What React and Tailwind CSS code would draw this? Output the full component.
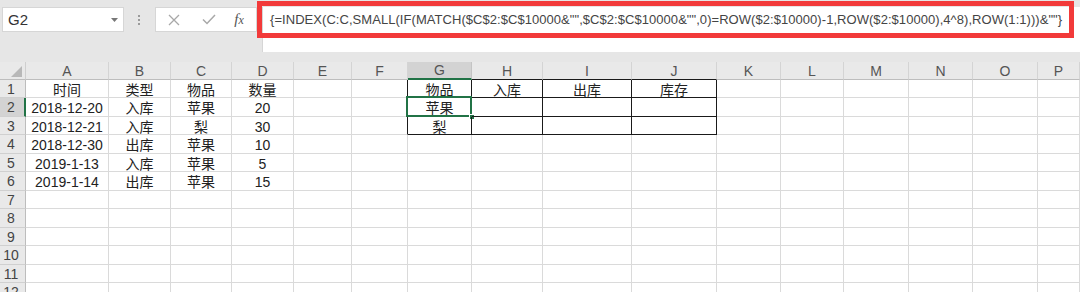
import React from 'react';

const FORMULA = '{=INDEX(C:C,SMALL(IF(MATCH($C$2:$C$10000&"",$C$2:$C$10000&"",0)=ROW($2:$10000)-1,ROW($2:$10000),4^8),ROW(1:1)))&""}';

const COLS = ['A', 'B', 'C', 'D', 'E', 'F', 'G', 'H', 'I', 'J', 'K', 'L', 'M', 'N', 'O', 'P'];
const ROW_HEIGHTS = ['h-[18px]', 'h-[19px]', 'h-[18px]', 'h-[19px]', 'h-[18px]', 'h-[19px]', 'h-[18px]', 'h-[19px]', 'h-[18px]', 'h-[19px]', 'h-[18px]', 'h-[19px]'];

const GRID = 'grid grid-cols-[26px_83px_62px_61px_62px_58px_56px_64px_71px_89px_85px_64px_63px_65px_64px_65px_42px]';

// cell contents, keyed by row then column index (A = 0)
const DATA = {
  1: ['时间', '类型', '物品', '数量', '', '', '物品', '入库', '出库', '库存'],
  2: ['2018-12-20', '入库', '苹果', '20', '', '', '苹果'],
  3: ['2018-12-21', '入库', '梨', '30', '', '', '梨'],
  4: ['2018-12-30', '出库', '苹果', '10'],
  5: ['2019-1-13', '入库', '苹果', '5'],
  6: ['2019-1-14', '出库', '苹果', '15'],
};

function cellBorder(row, col) {
  const inTable = row >= 1 && row <= 3;
  if (inTable && col >= 6 && col <= 9) return 'border-r border-b border-r-[#1a1a1a] border-b-[#1a1a1a]';
  if (inTable && col === 5) return 'border-r border-b border-r-[#1a1a1a] border-b-[#dadada]';
  return 'border-r border-b border-[#dadada]';
}

function Toolbar() {
  return (
    <div className="h-[62px] bg-[#e6e6e6] flex items-start pt-[7px] pl-[2px]">
      <div className="shrink-0 w-[122px] h-[25px] bg-white border border-[#d6d6d6] flex items-center justify-between pl-[5px] pr-[5px]">
        <span className="text-[15px] text-[#333] leading-none">G2</span>
        <svg width="7" height="4" viewBox="0 0 7 4"><path d="M0 0h7L3.5 4z" fill="#777" /></svg>
      </div>
      <div className="shrink-0 w-[31px] h-[25px] flex flex-col items-center justify-center gap-[2px] pr-[1px]">
        <div className="w-[2px] h-[2px] bg-[#9a9a9a]" />
        <div className="w-[2px] h-[2px] bg-[#9a9a9a]" />
        <div className="w-[2px] h-[2px] bg-[#9a9a9a]" />
      </div>
      <div className="shrink-0 w-[102px] h-[25px] bg-white border border-[#d6d6d6] flex items-center">
        <div className="w-[34px] flex justify-center pl-[2px]">
          <svg width="12" height="12" viewBox="0 0 12 12"><path d="M1 1l10 10M11 1L1 11" stroke="#a8a8a8" strokeWidth="1.3" /></svg>
        </div>
        <div className="w-[36px] flex justify-center pl-[2px]">
          <svg width="14" height="11" viewBox="0 0 14 11"><path d="M1 5.5l4 4L13 1" stroke="#a8a8a8" strokeWidth="1.5" fill="none" /></svg>
        </div>
        <div className="flex-1 flex justify-center pr-[4px]">
          <span className="font-['Liberation_Serif',serif] italic text-[15px] text-[#555] leading-none">f<span className="text-[12px]">x</span></span>
        </div>
      </div>
      <div className="relative ml-[5px] flex-1 min-w-0 h-[45px] bg-white border-l border-[#d6d6d6]">
        <div className="pl-[7px] pt-[4px] text-[13px] tracking-[0.05px] leading-[18px] text-[#444] whitespace-nowrap overflow-hidden font-['Liberation_Sans',sans-serif]">
          {FORMULA}
        </div>
        <div className="absolute left-[-6px] top-[-6px] right-[6px] h-[37px] border-[5px] border-[#f23a3a]" />
      </div>
    </div>
  );
}

function HeaderRow() {
  return (
    <div className={`${GRID} h-[18px] bg-[#e9e9e9]`}>
      <div className="border-r border-b border-r-[#cfcfcf] border-b-[#bdbdbd] flex items-end justify-end pr-[3px] pb-[2px]">
        <svg width="11" height="11" viewBox="0 0 11 11"><path d="M11 0v11H0z" fill="#b8b8b8" /></svg>
      </div>
      {COLS.map((c, i) => (
        <div
          key={c}
          className={
            i === 6
              ? 'bg-[#d3d3d3] border-r border-r-[#c4c4c4] border-b-2 border-b-[#217346] flex items-center justify-center text-[14px] text-[#555] leading-none'
              : i >= 7 && i <= 9
              ? 'border-r border-b border-r-[#d4d4d4] border-b-[#1a1a1a] flex items-center justify-center text-[14px] text-[#555] leading-none'
              : 'border-r border-b border-r-[#d4d4d4] border-b-[#bdbdbd] flex items-center justify-center text-[14px] text-[#555] leading-none'
          }
        >
          {c}
        </div>
      ))}
    </div>
  );
}

function Row({ n, heightClass }) {
  const vals = DATA[n] || [];
  return (
    <div className={`${GRID} ${heightClass}`}>
      <div
        className={
          n === 2
            ? 'bg-[#d3d3d3] border-r-2 border-b border-r-[#217346] border-b-[#d0d0d0] flex items-center justify-center pr-[2px] text-[14px] text-[#444] leading-none'
            : 'bg-[#e9e9e9] border-r border-b border-r-[#bdbdbd] border-b-[#d0d0d0] flex items-center justify-center pr-[3px] text-[14px] text-[#444] leading-none'
        }
      >
        {n}
      </div>
      {COLS.map((c, i) => (
        <div key={c} className={`relative ${cellBorder(n, i)} flex items-center justify-center pt-[2px] text-[14px] text-[#222] leading-none whitespace-nowrap`}>
          {vals[i] || ''}
          {n === 2 && i === 6 && (
            <>
              <div className="absolute left-[-2px] top-[-2px] right-[-1px] bottom-[-1px] border-2 border-[#217346]" />
              <div className="absolute right-[-4px] bottom-[-4px] w-[6px] h-[6px] bg-[#217346] border border-white" />
            </>
          )}
        </div>
      ))}
    </div>
  );
}

export default function App() {
  return (
    <div className="w-[1080px] h-[292px] overflow-hidden bg-white font-['Liberation_Sans','Noto_Sans_CJK_SC',sans-serif]">
      <Toolbar />
      <HeaderRow />
      {ROW_HEIGHTS.map((h, i) => (
        <Row key={i} n={i + 1} heightClass={h} />
      ))}
    </div>
  );
}
